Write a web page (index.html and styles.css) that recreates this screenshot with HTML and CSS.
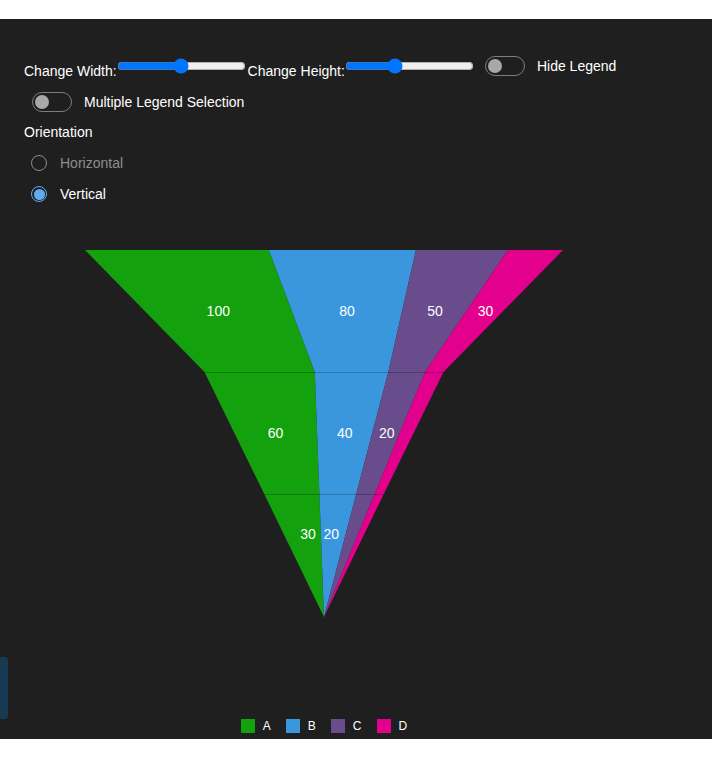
FILE: index.html
```html
<!DOCTYPE html>
<html lang="en">
<head>
<meta charset="utf-8">
<title>Funnel Chart</title>
<link rel="stylesheet" href="styles.css">
</head>
<body>
<div class="app">
  <div class="row row-top">
    <span class="lbl lbl-low">Change Width:</span>
    <input class="range" type="range" min="0" max="100" value="50">
    <span class="lbl lbl-low">Change Height:</span>
    <input class="range" type="range" min="0" max="1000" value="376">
    <div class="switch switch-first">
      <span class="track"><span class="knob"></span></span>
      <span class="lbl">Hide Legend</span>
    </div>
  </div>
  <div class="row row-second">
    <div class="switch">
      <span class="track"><span class="knob"></span></span>
      <span class="lbl">Multiple Legend Selection</span>
    </div>
  </div>
  <div class="group-title">Orientation</div>
  <div class="radios">
    <div class="radio-row">
      <span class="radio"></span>
      <span class="radio-lbl muted">Horizontal</span>
    </div>
    <div class="radio-row">
      <span class="radio on"></span>
      <span class="radio-lbl">Vertical</span>
    </div>
  </div>

  <div class="chart">
    <svg class="funnel" width="648" height="476" viewBox="0 0 648 476">
      <g class="seg-a">
        <polygon points="85,20 268.85,20 314.8,142 204.5,142"/>
        <polygon points="204.5,142 314.8,142 319.4,264 264.25,264"/>
        <polygon points="264.25,264 319.4,264 324,387"/>
      </g>
      <g class="seg-b">
        <polygon points="268.85,20 415.9,20 388.3,142 314.8,142"/>
        <polygon points="314.8,142 388.3,142 356.2,264 319.4,264"/>
        <polygon points="319.4,264 356.2,264 324,387"/>
      </g>
      <g class="seg-c">
        <polygon points="415.9,20 507.85,20 425.1,142 388.3,142"/>
        <polygon points="388.3,142 425.1,142 374.6,264 356.2,264"/>
        <polygon points="356.2,264 374.6,264 324,387"/>
      </g>
      <g class="seg-d">
        <polygon points="507.85,20 563,20 443.5,142 425.1,142"/>
        <polygon points="425.1,142 443.5,142 383.75,264 374.6,264"/>
        <polygon points="374.6,264 383.75,264 324,387"/>
      </g>
      <line class="sep" x1="204.5" y1="142.5" x2="443.5" y2="142.5"/>
      <line class="sep" x1="264.25" y1="264.5" x2="383.75" y2="264.5"/>
      <g class="vals">
        <text x="218.3" y="80.5">100</text>
        <text x="347" y="80.5">80</text>
        <text x="435" y="80.5">50</text>
        <text x="485.5" y="80.5">30</text>
        <text x="275.5" y="203">60</text>
        <text x="344.8" y="203">40</text>
        <text x="386.7" y="203">20</text>
        <text x="308" y="304.2">30</text>
        <text x="331.2" y="304.2">20</text>
      </g>
    </svg>
    <div class="legend">
      <div class="leg-item"><span class="sw sw-a"></span><span class="leg-lbl">A</span></div>
      <div class="leg-item"><span class="sw sw-b"></span><span class="leg-lbl">B</span></div>
      <div class="leg-item"><span class="sw sw-c"></span><span class="leg-lbl">C</span></div>
      <div class="leg-item"><span class="sw sw-d"></span><span class="leg-lbl">D</span></div>
    </div>
  </div>

  <div class="side-tab"></div>
</div>
</body>
</html>
```

FILE: styles.css
```css
html, body {
  margin: 0;
  padding: 0;
  background: #ffffff;
}
body {
  padding: 19px 0 20px;
  font-family: "Liberation Sans", Arial, sans-serif;
  font-size: 14px;
  color: #ffffff;
}
.app {
  position: relative;
  height: 720px;
  box-sizing: border-box;
  background: #1f1f1f;
  padding-top: 37px;
  overflow: hidden;
}
.row {
  display: flex;
  align-items: center;
  height: 20px;
  padding-left: 24px;
}
.row-second {
  margin-top: 16px;
}
.lbl {
  line-height: 20px;
  white-space: nowrap;
}
.lbl-low {
  padding-top: 9px;
}
.range {
  margin: 0 2px 0 0;
  width: 129px;
  height: 16px;
  accent-color: #0075ff;
}
.switch {
  display: flex;
  align-items: center;
  gap: 12px;
  margin-left: 8px;
}
.switch-first {
  margin-left: 9px;
}
.track {
  display: flex;
  align-items: center;
  box-sizing: border-box;
  width: 40px;
  height: 20px;
  border: 1px solid #7e7e7e;
  border-radius: 10px;
  padding-left: 2px;
}
.knob {
  width: 14px;
  height: 14px;
  border-radius: 50%;
  background: #a8a8a8;
}
.group-title {
  margin-top: 10px;
  padding-left: 24px;
  line-height: 20px;
}
.radios {
  display: flex;
  flex-direction: column;
  gap: 11px;
  margin-top: 11px;
  padding-left: 31px;
}
.radio-row {
  display: flex;
  align-items: center;
  height: 20px;
  gap: 13px;
}
.radio {
  box-sizing: border-box;
  width: 16px;
  height: 16px;
  border-radius: 50%;
  border: 1.5px solid #8c8c8c;
}
.radio.on {
  border: 1.5px solid #62abf1;
  padding: 1.5px;
  background: #62abf1 content-box;
}
.radio-lbl {
  line-height: 20px;
}
.muted {
  color: #8e8e8e;
}
.chart {
  margin-top: 26px;
  width: 648px;
}
.funnel {
  display: block;
}
.seg-a { fill: #13a10e; }
.seg-b { fill: #3a96dd; }
.seg-c { fill: #684c8c; }
.seg-d { fill: #e3008c; }
.sep {
  stroke: rgba(0, 0, 0, 0.22);
  stroke-width: 1;
}
.vals text {
  fill: #ffffff;
  font-family: "Liberation Sans", Arial, sans-serif;
  font-size: 14px;
  text-anchor: middle;
  dominant-baseline: central;
}
.legend {
  display: flex;
  justify-content: center;
  gap: 15px;
  height: 20px;
  align-items: center;
  margin-top: 10px;
}
.leg-item {
  display: flex;
  align-items: center;
  gap: 8px;
}
.sw {
  width: 14px;
  height: 14px;
}
.sw-a { background: #13a10e; }
.sw-b { background: #3a96dd; }
.sw-c { background: #684c8c; }
.sw-d { background: #e3008c; }
.leg-lbl {
  font-size: 12px;
  line-height: 14px;
}
.side-tab {
  position: absolute;
  left: 0;
  top: 638px;
  width: 8px;
  height: 62px;
  background: #173a52;
  border-radius: 0 4px 4px 0;
}
```
